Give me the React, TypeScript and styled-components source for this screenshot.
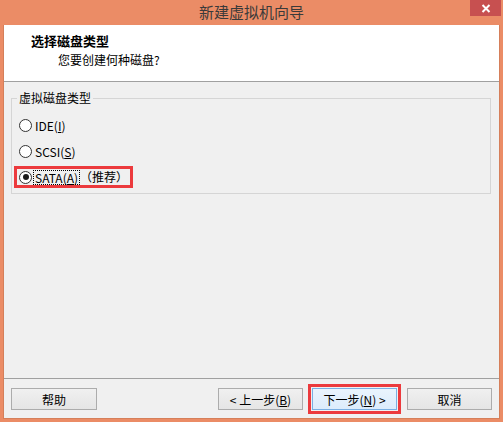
import styled, { createGlobalStyle } from "styled-components";

const GlobalStyle = createGlobalStyle`
  html, body {
    margin: 0;
    padding: 0;
    background: #eb8c66;
  }
  body {
    font-family: "Noto Sans CJK SC", "Noto Sans", sans-serif;
    font-size: 12px;
    color: #000;
  }
`;

export default function App() {
  return (
    <>
      <GlobalStyle />
      <Window>
        <TitleBar>
          <Title>新建虚拟机向导</Title>
          <CloseButton aria-label="关闭">
            <svg width="10" height="9" viewBox="0 0 10 9">
              <path d="M1.5 1 L8.5 8 M8.5 1 L1.5 8" stroke="#fff" strokeWidth="2" />
            </svg>
          </CloseButton>
        </TitleBar>
        <Body>
          <Header>
            <HeaderTitle>选择磁盘类型</HeaderTitle>
            <HeaderSub>您要创建何种磁盘?</HeaderSub>
          </Header>
          <Content>
            <GroupBox>
              <Legend>虚拟磁盘类型</Legend>
              <RadioList>
                <RadioRow>
                  <Radio />
                  <RadioLabel>
                    IDE(<U>I</U>)
                  </RadioLabel>
                </RadioRow>
                <RadioRow>
                  <Radio />
                  <RadioLabel>
                    SCSI(<U>S</U>)
                  </RadioLabel>
                </RadioRow>
                <RadioRow $highlighted>
                  <Radio $checked />
                  <RadioLabel $focused>
                    SATA(<U>A</U>)
                  </RadioLabel>
                  <Hint>（推荐）</Hint>
                </RadioRow>
              </RadioList>
            </GroupBox>
          </Content>
          <Footer>
            <Button>帮助</Button>
            <Spacer />
            <Button>
              &lt; 上一步(<U>B</U>)
            </Button>
            <Button $primary $highlighted>
              下一步(<U>N</U>) &gt;
            </Button>
            <Button $gap={10}>取消</Button>
          </Footer>
        </Body>
      </Window>
    </>
  );
}

const Window = styled.div`
  width: 503px;
  height: 422px;
  display: flex;
  flex-direction: column;
  background: #eb8c66;
  box-sizing: border-box;
`;

const TitleBar = styled.div`
  position: relative;
  height: 25px;
  flex-shrink: 0;
  display: flex;
  align-items: center;
  justify-content: center;
  padding-bottom: 2px;
  box-sizing: border-box;
`;

const Title = styled.div`
  font-size: 15px;
  color: #3a3a3a;
  line-height: 18px;
`;

const CloseButton = styled.div`
  position: absolute;
  top: 0;
  right: 2px;
  width: 31px;
  height: 16px;
  background: #c75050;
  display: flex;
  align-items: center;
  justify-content: center;
`;

const Body = styled.div`
  flex: 1;
  margin: 0 3px 3px 3px;
  display: flex;
  flex-direction: column;
  background: #f0f0f0;
  border: 1px solid #d57f5a;
  border-top: none;
`;

const Header = styled.div`
  height: 57px;
  box-sizing: border-box;
  background: #fff;
  border-bottom: 1px solid #a0a0a0;
  padding: 8px 0 0 27px;
`;

const HeaderTitle = styled.div`
  font-weight: bold;
  font-size: 13px;
  line-height: 16px;
`;

const HeaderSub = styled.div`
  margin: 3px 0 0 27px;
  line-height: 16px;
`;

const Content = styled.div`
  flex: 1;
  padding: 8px 8px 0 7px;
`;

const GroupBox = styled.fieldset`
  margin: 0;
  padding: 0 0 5px 0;
  border: 1px solid #d5d5d5;
`;

const Legend = styled.legend`
  margin-left: 5px;
  padding: 0 2px;
  line-height: 16px;
  color: #000;
`;

const RadioList = styled.div`
  display: flex;
  flex-direction: column;
  gap: 4px;
  padding-top: 8px;
`;

const RadioRow = styled.div<{ $highlighted?: boolean }>`
  display: flex;
  align-items: center;
  width: fit-content;
  height: 22px;
  box-sizing: border-box;
  margin-left: 2px;
  padding: 0 2px 0 2px;
  border: 3px solid ${(p) => (p.$highlighted ? "#ec3a3d" : "transparent")};
`;

const Radio = styled.span<{ $checked?: boolean }>`
  position: relative;
  width: 13px;
  height: 13px;
  box-sizing: border-box;
  border-radius: 50%;
  border: 1px solid #333;
  background: #fff;
  flex-shrink: 0;

  &::after {
    content: "";
    display: ${(p) => (p.$checked ? "block" : "none")};
    position: absolute;
    left: 2.5px;
    top: 2.5px;
    width: 6px;
    height: 6px;
    border-radius: 50%;
    background: #1a1a1a;
  }
`;

const RadioLabel = styled.span<{ $focused?: boolean }>`
  margin-left: 2px;
  padding: 0 1px;
  line-height: 13px;
  outline: ${(p) => (p.$focused ? "1px dotted #000" : "none")};
`;

const Hint = styled.span`
  margin-left: 1px;
  line-height: 16px;
`;

const U = styled.span`
  text-decoration: underline;
`;

const Footer = styled.div`
  display: flex;
  align-items: center;
  border-top: 1px solid #a0a0a0;
  padding: 9px 7px 8px 7px;
`;

const Spacer = styled.div`
  flex: 1;
`;

const Button = styled.button<{ $primary?: boolean; $highlighted?: boolean; $gap?: number }>`
  width: 85px;
  height: 22px;
  margin-left: ${(p) => (p.$gap ?? 9)}px;
  padding: 0;
  font-family: "Noto Sans CJK SC", "Noto Sans", sans-serif;
  font-size: 12px;
  color: #000;
  border: 1px solid ${(p) => (p.$primary ? "#7aafe3" : "#acacac")};
  background: ${(p) =>
    p.$primary
      ? "linear-gradient(#eaf4fd, #dcecfc)"
      : "linear-gradient(#f0f0f0, #e5e5e5)"};
  outline: ${(p) => (p.$highlighted ? "3px solid #ec3a3d" : "none")};
  outline-offset: 1px;

  &:first-child {
    margin-left: 0;
    width: 86px;
  }
`;
